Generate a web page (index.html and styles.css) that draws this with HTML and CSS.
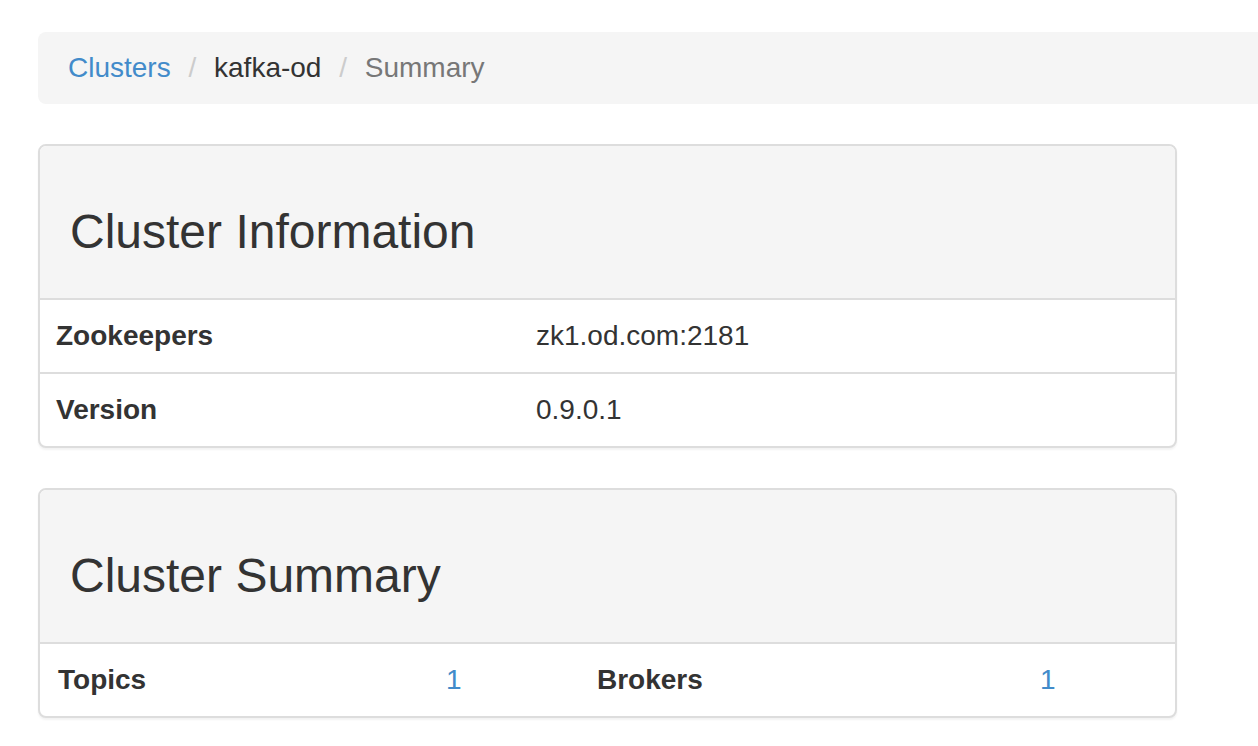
FILE: index.html
```html
<!DOCTYPE html>
<html>
<head>
<meta charset="utf-8">
<link rel="stylesheet" href="styles.css">
</head>
<body>
<div class="page">
  <ol class="breadcrumb">
    <li><a href="#">Clusters</a></li>
    <li>kafka-od</li>
    <li class="active">Summary</li>
  </ol>
  <div class="content">
    <div class="panel">
      <div class="panel-heading"><h3>Cluster Information</h3></div>
      <table class="table">
        <tbody>
          <tr><th class="label-col">Zookeepers</th><td>zk1.od.com:2181</td></tr>
          <tr><th class="label-col">Version</th><td>0.9.0.1</td></tr>
        </tbody>
      </table>
    </div>
    <div class="panel">
      <div class="panel-heading"><h3>Cluster Summary</h3></div>
      <table class="table summary">
        <tbody>
          <tr>
            <th class="c1">Topics</th>
            <td class="c2"><a href="#">1</a></td>
            <th class="c3">Brokers</th>
            <td class="c4"><a href="#">1</a></td>
          </tr>
        </tbody>
      </table>
    </div>
  </div>
</div>
</body>
</html>
```

FILE: styles.css
```css
html, body {
  margin: 0;
  padding: 0;
  background: #fff;
  overflow: hidden;
}
body {
  font-family: "Liberation Sans", Arial, sans-serif;
  font-size: 28px;
  line-height: 40px;
  color: #333;
}
.page {
  padding: 32px 0 0 38px;
}
a {
  color: #428bca;
  text-decoration: none;
}
.breadcrumb {
  list-style: none;
  margin: 0 0 40px 0;
  padding: 16px 30px;
  background: #f5f5f5;
  border-radius: 8px 0 0 8px;
}
.breadcrumb li {
  display: inline-block;
}
.breadcrumb li + li::before {
  content: "/\00a0";
  padding: 0 10px;
  color: #ccc;
}
.breadcrumb .active {
  color: #777;
}
.content {
  width: 1139px;
}
.panel {
  background: #fff;
  border: 2px solid #ddd;
  border-radius: 8px;
  box-shadow: 0 2px 2px rgba(0,0,0,0.05);
  margin-bottom: 40px;
  overflow: hidden;
}
.panel-heading {
  background: #f5f5f5;
  padding: 20px 30px;
  border-bottom: 2px solid #ddd;
}
.panel-heading h3 {
  margin: 40px 0 20px;
  font-size: 48px;
  font-weight: normal;
  line-height: 52px;
  color: #333;
}
.table {
  width: 100%;
  border-collapse: collapse;
  border-spacing: 0;
}
.summary {
  table-layout: fixed;
}
.table th, .table td {
  padding: 16px;
  line-height: 40px;
  text-align: left;
  vertical-align: top;
  border-top: 2px solid #ddd;
}
.table tr:first-child th, .table tr:first-child td {
  border-top: 0;
}
.table th {
  font-weight: bold;
}
.table .label-col {
  width: 448px;
}
.table .c1 {
  width: 356px;
  padding-left: 18px;
}
.table .c2 {
  width: 119px;
}
.table .c3 {
  width: 411px;
}
.table .c4 {
  width: auto;
}
```
